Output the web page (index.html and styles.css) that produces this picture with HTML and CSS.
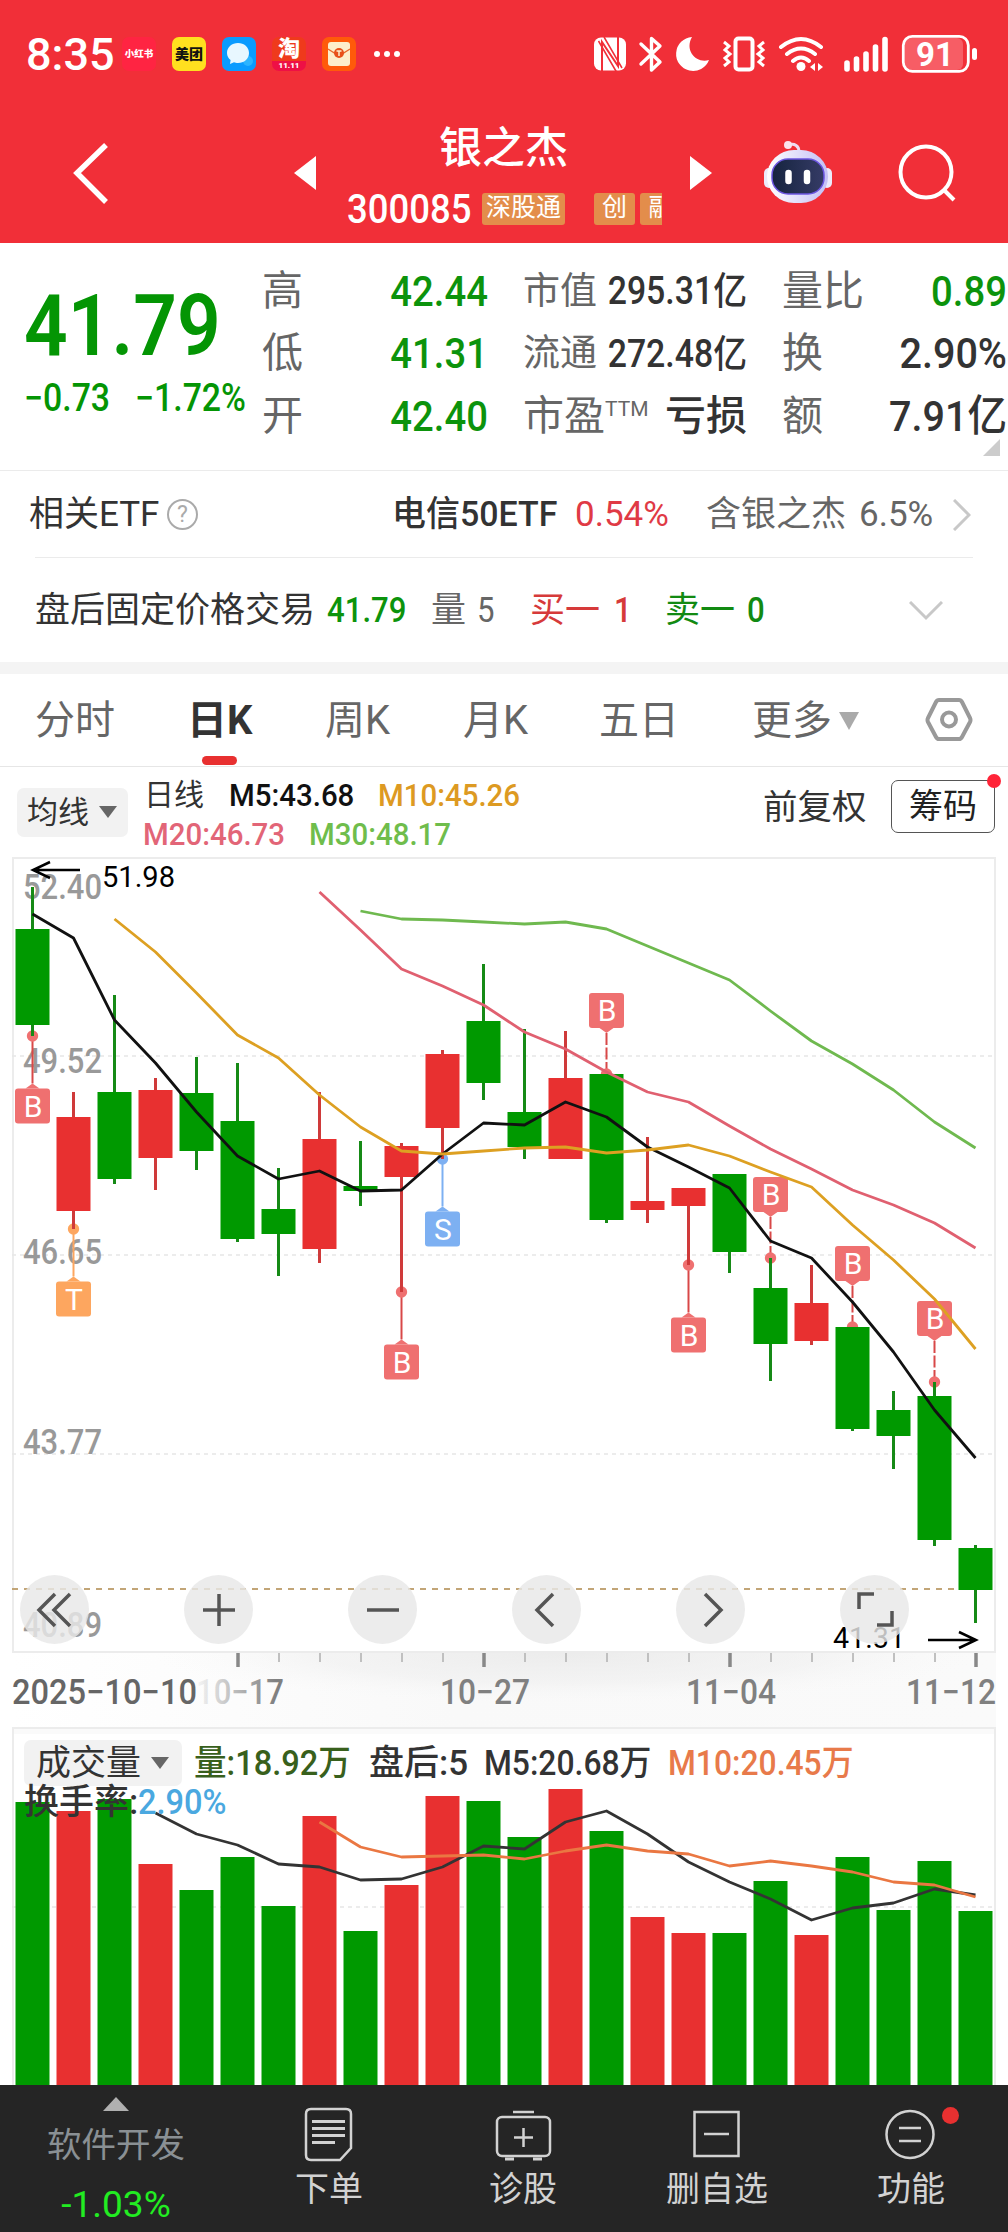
FILE: index.html
```html
<!DOCTYPE html>
<html lang="zh-CN">

<head>
    <meta charset="UTF-8">
    <meta name="viewport" content="width=device-width, initial-scale=1.0">
    <title>银之杰 300085</title>
    <link rel="stylesheet" href="styles.css">
</head>

<body>

    <!-- Header -->
    <header class="header">
        <div class="status">
            <span class="clock">8:35</span>
            <span class="app app-xhs">小红书</span>
            <span class="app app-mt">美团</span>
            <span class="app app-chat">
                <svg viewBox="0 0 34 34"><circle cx="26" cy="24" r="5" fill="#2bb4ff"/><path d="M16 6c6 0 11 4 11 10s-5 10-11 10c-1.500 0-3-.3-4-.7L8 27l.6-4C6.500 21.500 5 19 5 16 5 10 10 6 16 6z" fill="#e8f7ff"/></svg>
            </span>
            <span class="app app-tb"><b>淘</b><i>11.11</i></span>
            <span class="app app-mail">
                <svg viewBox="0 0 34 34"><rect x="6" y="5" width="22" height="24" rx="3" fill="#fdeecb"/><path d="M6 12l8 5h6l8-5" fill="none" stroke="#e8672a" stroke-width="1.300"/><circle cx="17" cy="16" r="5" fill="#e8501a"/><path d="M14.500 14h5M17 14v5" stroke="#fdeecb" stroke-width="1.500"/></svg>
            </span>
            <span class="dots"><i></i><i></i><i></i></span>
            <svg class="sys" viewBox="590 30 390 46" width="390" height="46">
                <rect x="594" y="36.500" width="32" height="33" rx="7" fill="#fff"/>
                <path d="M602 71V41l16 24V36" fill="none" stroke="#f12f38" stroke-width="2"/>
                <path d="M604 36l18 31M598.500 40l18 31" fill="none" stroke="#f12f38" stroke-width="1.500"/>
                <path d="M641 43l19 18-8.500 8V37.500l8.500 7.500-19 18" fill="none" stroke="#fff" stroke-width="3.400" stroke-linejoin="round" stroke-linecap="round"/>
                <path d="M692 36a17 17 0 1 0 17 23c-12 4-25-9-17-23z" fill="#fff"/>
                <rect x="735.500" y="37.500" width="17" height="31" rx="3" fill="none" stroke="#fff" stroke-width="4"/>
                <path d="M724 41l5 4-4 4 5 4-5 4 4 4-5 4M764 41l-5 4 4 4-5 4 5 4-4 4 5 4" fill="none" stroke="#fff" stroke-width="3"/>
                <path d="M781 46q20-16 40 0M787 53q14-11 28 0M793 60q8-7 16 0" fill="none" stroke="#fff" stroke-width="4" stroke-linecap="round"/>
                <circle cx="801" cy="65.500" r="4.500" fill="#fff"/>
                <path d="M810 66l5-4v8zM823 66l-5-4v8z" fill="#fff"/>
                <path d="M847 62v6M856.500 58v10M866 53v15M875.500 46v22M885 38.500v29.500" stroke="#fff" stroke-width="5.600" stroke-linecap="round"/>
                <rect x="905" y="37" width="58" height="32" rx="6" fill="#f75d65"/>
                <rect x="903.300" y="35.300" width="65" height="35" rx="9" fill="none" stroke="#fff" stroke-width="2.800"/>
                <rect x="972" y="47" width="5" height="12" rx="2.500" fill="#fff"/>
                <text x="935" y="65" class="battery">91</text>
            </svg>
        </div>
        <div class="nav">
            <svg class="back" viewBox="0 0 40 64" width="40" height="64"><path d="M36 4L7 32l29 29" fill="none" stroke="#fff" stroke-width="5.500"/></svg>
            <svg class="prev" viewBox="0 0 24 36" width="24" height="36"><path d="M1 18L23 1v34z" fill="#fff"/></svg>
            <div class="title">
                <h1>银之杰</h1>
                <div class="code"><span class="num">300085</span><em class="t1">深股通</em><em class="t2">创</em><em class="t3">融</em></div>
            </div>
            <svg class="next" viewBox="0 0 24 36" width="24" height="36"><path d="M23 18L1 1v34z" fill="#fff"/></svg>
            <svg class="robot" viewBox="0 0 70 66" width="70" height="66">
                <defs>
                    <linearGradient id="shell" x1="0" x2="1"><stop offset="0" stop-color="#fff"/><stop offset="1" stop-color="#c3bff5"/></linearGradient>
                    <linearGradient id="face" x1="0" x2="1"><stop offset="0" stop-color="#16243f"/><stop offset="1" stop-color="#353b66"/></linearGradient>
                </defs>
                <path d="M25 5c7-2 11 1 11 7" fill="none" stroke="#eedcf2" stroke-width="3"/>
                <circle cx="25" cy="5" r="4" fill="#fbe3ee"/>
                <rect x="1" y="28" width="10" height="20" rx="5" fill="#ecebfb"/>
                <rect x="59" y="28" width="10" height="20" rx="5" fill="#ecebfb"/>
                <rect x="4" y="10" width="61" height="53" rx="27" fill="url(#shell)"/>
                <rect x="9" y="19" width="52" height="35" rx="16" fill="url(#face)" stroke="#6b55e0" stroke-width="1.500"/>
                <path d="M25.500 33v8M44 33v8" stroke="#fff" stroke-width="6.500" stroke-linecap="round"/>
            </svg>
            <svg class="search" viewBox="0 0 60 60" width="60" height="60"><circle cx="28" cy="29" r="25.500" fill="none" stroke="#fff" stroke-width="4"/><path d="M46 47l10 10" stroke="#fff" stroke-width="4"/></svg>
        </div>
    </header>

    <!-- Quote -->
    <section class="quote">
        <div class="price">
            <strong class="num">41.79</strong>
            <div><span class="num">−0.73</span><span class="num">−1.72%</span></div>
        </div>
        <dl class="c1">
            <dt>高</dt><dd class="down">42.44</dd>
            <dt>低</dt><dd class="down">41.31</dd>
            <dt>开</dt><dd class="down">42.40</dd>
        </dl>
        <dl class="c2">
            <dt>市值</dt><dd>295.31亿</dd>
            <dt>流通</dt><dd>272.48亿</dd>
            <dt class="big">市盈<sup>TTM</sup></dt><dd class="big">亏损</dd>
        </dl>
        <dl class="c3">
            <dt>量比</dt><dd class="down">0.89</dd>
            <dt>换</dt><dd class="wide">2.90%</dd>
            <dt>额</dt><dd class="wide">7.91亿</dd>
        </dl>
        <i class="corner"></i>
    </section>

    <section class="etf">
        <span>相关ETF</span>
        <i class="help">?</i>
        <b>电信50ETF</b>
        <span class="up">0.54%</span>
        <span class="grey">含银之杰</span>
        <span class="grey">6.5%</span>
        <svg viewBox="0 0 18 32" width="18" height="32"><path d="M1 1l15 15L1 31" fill="none" stroke="#c8c8c8" stroke-width="3"/></svg>
    </section>

    <section class="after">
        <span>盘后固定价格交易</span>
        <b class="down num">41.79</b>
        <span class="grey">量</span>
        <span class="grey num">5</span>
        <span class="buy">买一</span>
        <b class="buy num">1</b>
        <span class="sell">卖一</span>
        <b class="sell num">0</b>
        <svg viewBox="0 0 34 20" width="34" height="20"><path d="M1 1l16 16L33 1" fill="none" stroke="#c8c8c8" stroke-width="3"/></svg>
    </section>

    <!-- Period tabs -->
    <nav class="tabs">
        <a>分时</a>
        <a class="active">日K</a>
        <a>周K</a>
        <a>月K</a>
        <a>五日</a>
        <a>更多<svg viewBox="0 0 22 18" width="22" height="18"><path d="M1 0h20L11 18z" fill="#aaa"/></svg></a>
        <svg class="hex" viewBox="0 0 48 46" width="48" height="46"><path d="M14 3h20q2 0 3 2l8 16q1 2 0 4l-8 15q-1 2-3 2H14q-2 0-3-2L3 25q-1-2 0-4l8-16q1-2 3-2z" fill="none" stroke="#999" stroke-width="4"/><circle cx="24" cy="22.500" r="7" fill="none" stroke="#999" stroke-width="4"/></svg>
    </nav>

    <section class="legend">
        <span class="pill">均线<svg viewBox="0 0 18 12" width="18" height="12"><path d="M0 0h18L9 12z" fill="#666"/></svg></span>
        <div class="ma">
            <div><span class="name">日线</span><span class="m5 num">M5:43.68</span><span class="m10 num">M10:45.26</span></div>
            <div><span class="m20 num">M20:46.73</span><span class="m30 num">M30:48.17</span></div>
        </div>
        <span class="adjust">前复权</span>
        <span class="chips">筹码</span>
    </section>

    <!-- Candles and volume -->
    <section class="charts">
        <svg id="kline" viewBox="0 857 1008 870" width="1008" height="870"></svg>
        <div class="tools">
            <span><svg viewBox="0 0 40 40"><path d="M20 4L4 20l16 16M35 4L19 20l16 16"/></svg></span>
            <span><svg viewBox="0 0 40 40"><path d="M4 20h32M20 4v32"/></svg></span>
            <span><svg viewBox="0 0 40 40"><path d="M4 20h32"/></svg></span>
            <span><svg viewBox="0 0 40 40"><path d="M26 4L10 20l16 16"/></svg></span>
            <span><svg viewBox="0 0 40 40"><path d="M14 4l16 16-16 16"/></svg></span>
            <span><svg viewBox="0 0 40 40"><path d="M4 19V4h15M37 21v14H22"/></svg></span>
        </div>
    </section>
    <section class="charts">
        <svg id="volume" viewBox="0 1727 1008 358" width="1008" height="358"></svg>
        <div class="vol-head">
            <div class="vol-row">
                <span class="pill">成交量<svg viewBox="0 0 18 12" width="18" height="12"><path d="M0 0h18L9 12z" fill="#666"/></svg></span>
                <span class="v1 num">量:18.92万</span>
                <span class="v2">盘后:5</span>
                <span class="v3 num">M5:20.68万</span>
                <span class="v4 num">M10:20.45万</span>
            </div>
            <div class="turnover">换手率:<span class="num">2.90%</span></div>
        </div>
    </section>

    <!-- Bottom bar -->
    <footer class="bar">
        <div class="sector">
            <svg viewBox="0 0 26 14" width="26" height="14"><path d="M0 14L13 0l13 14z" fill="#b0b0b0"/></svg>
            <span>软件开发</span>
            <b>-1.03%</b>
        </div>
        <div class="item">
            <svg viewBox="0 0 60 60" width="60" height="60"><path d="M12 4h35q5 0 5 5v34L41 55H12q-5 0-5-5V9q0-5 5-5z"/><path d="M13 16.500h33M13 23.500h33M13 30.500h33M13 37.500h23" stroke-width="3"/></svg>
            <span>下单</span>
        </div>
        <div class="item">
            <svg viewBox="0 0 60 60" width="60" height="60"><path d="M20 7h21"/><rect x="4" y="12" width="53" height="39" rx="5"/><path d="M30.500 23v19M21 32.500h19"/><path d="M12 54h9M40 54h9" stroke-width="3"/></svg>
            <span>诊股</span>
        </div>
        <div class="item">
            <svg viewBox="0 0 60 60" width="60" height="60"><rect x="7.500" y="7" width="44" height="44"/><path d="M17 29h25"/></svg>
            <span>删自选</span>
        </div>
        <div class="item">
            <svg viewBox="0 0 60 60" width="60" height="60"><circle cx="29" cy="29.500" r="23.500"/><path d="M18 23h22M18 36h22"/></svg>
            <span>功能</span>
            <i class="badge"></i>
        </div>
    </footer>

    <script src="chart.js"></script>

</body>

</html>
```
FILE: styles.css
```css
* {
    margin: 0;
    padding: 0;
    box-sizing: border-box;
}

body {
    width: 1008px;
    font-family: Roboto, "Noto Sans CJK SC", sans-serif;
    font-size: 35px;
    line-height: 1;
    color: #333;
    background: #fff;
    white-space: nowrap;
}

i, em {
    font-style: normal;
}

svg {
    display: block;
    flex: none;
}

/* condensed figures */
.num {
    display: inline-block;
    flex: none;
    transform: scaleX(0.89);
    transform-origin: left;
}

.down { color: #0c930c; }
.up { color: #e03a45; }
.grey { color: #666; }
.buy { color: #d63a3a; }
.sell { color: #128a12; }

/* Header */
.header {
    height: 243px;
    background: #f12f38;
    color: #fff;
}

.status {
    display: flex;
    align-items: center;
    height: 108px;
    padding-left: 26px;
}

.clock {
    width: 96px;
    font-size: 45px;
    font-weight: 500;
}

.app {
    display: flex;
    align-items: center;
    justify-content: center;
    width: 34px;
    height: 34px;
    margin-right: 16px;
    border-radius: 7px;
    font-weight: 900;
}

.app svg { width: 34px; height: 34px; }
.app-xhs { background: #ff2442; font-size: 9.5px; }
.app-mt { background: #ffe01f; color: #111; font-size: 14px; }
.app-chat { background: #0a9bff; }

.app-tb {
    flex-direction: column;
    background: linear-gradient(#ef3a1c 0 70%, #ee1045 70%);
}

.app-tb b { font-size: 22px; line-height: 24px; }
.app-tb i { font-size: 8px; line-height: 10px; }
.app-mail { background: #ff5a0a; }

.dots {
    display: flex;
    gap: 4px;
    margin-left: 2px;
}

.dots i {
    width: 6px;
    height: 6px;
    border-radius: 50%;
    background: #fff;
}

.sys {
    margin-left: 190px;
}

.battery {
    font-size: 33px;
    font-weight: 700;
    fill: #fff;
    text-anchor: middle;
}

.nav {
    display: flex;
    align-items: center;
    height: 130px;
    padding-left: 70px;
}

.prev { margin-left: 183px; }

.title {
    width: 315px;
    margin-left: 30px;
    overflow: hidden;
}

.title h1 {
    padding-left: 92px;
    font-size: 43px;
    font-weight: 500;
    line-height: 60px;
}

.code {
    display: flex;
    align-items: center;
    height: 40px;
    margin-top: 11px;
    font-size: 41px;
    font-weight: 500;
}

.code span { width: 141px; margin-right: -6px; padding-top: 1px; }

.code em {
    flex: none;
    height: 32px;
    border-radius: 3px;
    background: #e38d4b;
    font-size: 25px;
    font-weight: 400;
    line-height: 30px;
    text-align: center;
}

.t1 { width: 83px; }
.t2 { width: 41px; margin: 0 5px 0 29px; }
.t3 { width: 42px; }
.next { margin-left: 27px; }
.robot { margin-left: 50px; }
.search { margin-left: 65px; }

/* Quote */
.quote {
    position: relative;
    display: flex;
    height: 228px;
    padding: 17px 0 0 24px;
    border-bottom: 1px solid #ebebeb;
}

.price {
    width: 238px;
    color: #049504;
}

.price strong {
    display: block;
    padding-top: 23px;
    font-size: 86px;
    font-weight: 600;
}

.price div {
    display: flex;
    margin-top: 10px;
    font-size: 38px;
    font-weight: 500;
}

.price div span:first-child { width: 111px; }

.quote dl {
    flex: none;
    display: grid;
    grid-template-columns: 62px 1fr;
    grid-auto-rows: 62.5px;
    align-items: center;
    font-size: 41px;
}

.quote dt { color: #666; }

.quote dd {
    font-size: 43px;
    font-weight: 500;
    text-align: right;
    transform: scaleX(0.89);
    transform-origin: right;
}

.c1 { width: 226px; }
.quote .c2 { width: 224px; margin-left: 35px; font-size: 37px; }
.quote .c2 dd { font-size: 38px; }
.quote .c2 .big { font-size: 41px; transform: none; }
.quote .c3 { width: 225px; margin-left: 35px; }
.quote .c3 .wide { transform: scaleX(0.92); }

.quote sup {
    font-size: 21px;
    line-height: 0;
    vertical-align: 14px;
}

.corner {
    position: absolute;
    right: 8px;
    bottom: 14px;
    border-style: solid;
    border-width: 0 0 17px 17px;
    border-color: transparent transparent #ccc;
}

.etf,
.after {
    display: grid;
    align-items: center;
}

.etf {
    grid-template-columns: 138px 225px 183px 131px 153px 94px 18px;
    height: 87px;
    padding: 0 0 0 29px;
    background: linear-gradient(#ebebeb, #ebebeb) 35px 100% / 938px 1px no-repeat;
}

.etf b {
    font-weight: 500;
    transform: scaleX(0.97);
    transform-origin: left;
}

.help {
    width: 31px;
    height: 31px;
    border: 2px solid #aaa;
    border-radius: 50%;
    color: #aaa;
    font-size: 23px;
    line-height: 27px;
    text-align: center;
}

.after {
    grid-template-columns: 292px 104px 46px 53px 84px 51px 82px 162px 34px;
    height: 104px;
    padding: 1px 0 0 35px;
}

.after b { font-weight: 500; }

/* Tabs */
.tabs {
    display: grid;
    grid-template-columns: 152px 138px 138px 136px 153px 173px 48px;
    align-items: center;
    height: 105px;
    padding-left: 35px;
    border-top: 12px solid #f4f4f4;
    border-bottom: 1px solid #e6e6e6;
    color: #666;
    font-size: 40px;
}

.tabs a {
    position: relative;
    display: flex;
    align-items: center;
    padding-top: 2px;
}

.tabs a svg { margin-left: 6px; }

.active {
    color: #333;
    font-weight: 700;
}

.active::after {
    content: "";
    position: absolute;
    left: 15px;
    top: 57px;
    width: 35px;
    height: 9px;
    border-radius: 5px;
    background: #e83030;
}

.legend {
    display: flex;
    align-items: center;
    height: 90px;
    padding-left: 17px;
}

.pill {
    display: flex;
    align-items: center;
    height: 49px;
    border-radius: 7px;
    background: #f2f2f2;
}

.legend .pill {
    width: 111px;
    padding-left: 10px;
    font-size: 31px;
}

.pill svg { margin-left: 10px; }

.ma {
    width: 620px;
    margin-left: 15px;
    padding-top: 4px;
    font-size: 32px;
    font-weight: 500;
}

.ma div {
    display: flex;
    height: 39px;
    align-items: center;
}

.ma .num { transform: scaleX(0.92); }
.ma .name { width: 86px; font-weight: 400; font-size: 30px; padding-left: 1px; }
.m5 { width: 149px; color: #111; }
.m10 { color: #dd9a22; }
.m20 { width: 166px; color: #e26577; }
.m30 { color: #6fbd4c; }
.adjust { width: 128px; margin-top: -9px; font-size: 34.5px; }

.chips {
    position: relative;
    width: 104px;
    height: 53px;
    margin-top: -12px;
    border: 1px solid #555;
    border-radius: 7px;
    color: #222;
    font-size: 34px;
    line-height: 50px;
    text-align: center;
}

.chips::after {
    content: "";
    position: absolute;
    right: -7px;
    top: -7px;
    width: 14px;
    height: 14px;
    border-radius: 50%;
    background: #ff2438;
}

/* Charts */
.charts {
    position: relative;
}

.tools {
    position: absolute;
    left: 20px;
    top: 718px;
    display: flex;
    gap: 95px;
}

.tools span {
    display: flex;
    align-items: center;
    justify-content: center;
    width: 69px;
    height: 69px;
    border-radius: 50%;
    background: rgba(232, 232, 232, 0.82);
}

.tools svg {
    width: 40px;
    height: 40px;
    fill: none;
    stroke: #555;
    stroke-width: 3.5;
}

.axis-price { font-size: 35px; fill: #999; font-weight: 500; }
.axis-date { font-size: 35px; fill: #808080; font-weight: 500; }
.peak { font-size: 30px; fill: #000; }
.flag { font-size: 30px; fill: #fff; text-anchor: middle; }

.vol-head {
    position: absolute;
    left: 24px;
    top: 13px;
    font-weight: 500;
}

.vol-row {
    display: flex;
    align-items: center;
    height: 46px;
}

.vol-row .pill {
    flex: none;
    width: 158px;
    height: 46px;
    padding-left: 12px;
    font-weight: 400;
}

.v1 { width: 175px; margin-left: 12px; color: #38601c; }
.vol-row .v1 { transform: scaleX(0.93); }
.v2 { flex: none; width: 115px; }
.v3 { width: 184px; }
.v4 { color: #e87a4a; }
.vol-row .v3, .vol-row .v4 { transform: scaleX(0.91); }
.turnover { line-height: 33px; }
.turnover span { color: #4aa8e0; transform: scaleX(0.93); }

/* Bottom bar */
.bar {
    display: grid;
    grid-template-columns: 232px repeat(4, 194px);
    height: 147px;
    background: #252525;
    color: #d2d2d2;
    font-size: 34px;
}

.sector,
.item {
    position: relative;
    display: flex;
    flex-direction: column;
    align-items: center;
}

.sector {
    padding-top: 12px;
    color: #8a9094;
    font-size: 34.5px;
}

.sector span { margin-top: 17px; }

.sector b {
    margin-top: 23px;
    color: #22ec22;
    font-size: 37px;
    font-weight: 400;
}

.item {
    padding-top: 20px;
}

.item svg {
    fill: none;
    stroke: #d2d2d2;
    stroke-width: 2.5;
}

.item span { margin-top: 7px; }

.badge {
    position: absolute;
    left: 128px;
    top: 22px;
    width: 17px;
    height: 17px;
    border-radius: 50%;
    background: #e83030;
}
```
FILE: chart.js
```js
const RED = '#e83030';
const GREEN = '#009900';
const STEP = 41;
const X0 = 32.5;
const BAR = 34;

// colour, body top, body bottom, wick top, wick bottom, volume top
const days = [
    ['g', 929, 1025, 887, 1036, 1802],
    ['r', 1117, 1211, 1092, 1229, 1811],
    ['g', 1092, 1179, 995, 1184, 1799],
    ['r', 1090, 1158, 1078, 1190, 1864],
    ['g', 1093, 1151, 1057, 1170, 1890],
    ['g', 1121, 1239, 1063, 1242, 1857],
    ['g', 1209, 1234, 1168, 1276, 1906],
    ['r', 1139, 1249, 1092, 1263, 1816],
    ['g', 1186, 1191, 1141, 1206, 1931],
    ['r', 1146, 1177, 1143, 1292, 1885],
    ['r', 1054, 1128, 1050, 1159, 1796],
    ['g', 1021, 1083, 964, 1100, 1801],
    ['g', 1112, 1147, 1029, 1159, 1837],
    ['r', 1078, 1159, 1031, 1159, 1789],
    ['g', 1074, 1220, 1074, 1223, 1831],
    ['r', 1201, 1210, 1137, 1223, 1917],
    ['r', 1188, 1206, 1188, 1265, 1933],
    ['g', 1174, 1252, 1174, 1273, 1933],
    ['g', 1288, 1344, 1258, 1381, 1881],
    ['r', 1303, 1341, 1265, 1345, 1935],
    ['g', 1327, 1429, 1327, 1431, 1857],
    ['g', 1410, 1436, 1391, 1469, 1910],
    ['g', 1396, 1540, 1382, 1546, 1861],
    ['g', 1548, 1590, 1545, 1623, 1911]
];

// first day index, then one y value per day
const averages = [
    ['#111111', 0, [914, 938, 1020, 1063, 1112, 1156, 1179, 1171, 1191, 1190, 1154, 1123, 1125, 1102, 1117, 1147, 1167, 1188, 1241, 1258, 1302, 1352, 1410, 1458]],
    ['#6fb94f', 8, [911, 919, 920, 922, 924, 922, 929, 946, 963, 980, 1011, 1041, 1064, 1090, 1122, 1148]],
    ['#e06070', 7, [892, 930, 969, 986, 1005, 1032, 1049, 1072, 1092, 1102, 1126, 1149, 1169, 1190, 1205, 1223, 1248]],
    ['#dda022', 2, [919, 952, 993, 1035, 1058, 1095, 1127, 1151, 1154, 1151, 1148, 1147, 1153, 1150, 1145, 1156, 1172, 1187, 1225, 1260, 1299, 1349]]
];

const volumeAverages = [
    ['#333333', 3, [1813, 1834, 1845, 1864, 1867, 1880, 1879, 1867, 1846, 1849, 1822, 1811, 1834, 1862, 1882, 1899, 1920, 1908, 1903, 1889, 1895]],
    ['#ea7742', 7, [1822, 1847, 1857, 1856, 1855, 1859, 1851, 1845, 1851, 1854, 1866, 1861, 1866, 1872, 1882, 1885, 1897]]
];

// day index, letter, dot y, flag above the dot or below it
const flags = [
    [0, 'B', 1036, 'below'],
    [1, 'T', 1229, 'below'],
    [9, 'B', 1292, 'below'],
    [10, 'S', 1159, 'below'],
    [14, 'B', 1074, 'above'],
    [16, 'B', 1265, 'below'],
    [18, 'B', 1258, 'above'],
    [20, 'B', 1327, 'above'],
    [22, 'B', 1382, 'above']
];
const flagColors = { B: '#ef7070', T: '#fda65f', S: '#7db0f2' };

const x = i => X0 + i * STEP;
const rect = (l, t, w, h, fill, extra = '') => `<rect x="${l}" y="${t}" width="${w}" height="${h}" fill="${fill}" ${extra}/>`;
const line = (x1, y1, x2, y2, color, w, extra = '') => `<line x1="${x1}" y1="${y1}" x2="${x2}" y2="${y2}" stroke="${color}" stroke-width="${w}" ${extra}/>`;
const text = (l, y, w, cls, str, extra = '') => `<text x="${l}" y="${y}" class="${cls}" textLength="${w}" lengthAdjust="spacingAndGlyphs" ${extra}>${str}</text>`;
const curve = ([color, start, ys]) => `<polyline points="${ys.map((y, n) => x(start + n) + ',' + y).join(' ')}" fill="none" stroke="${color}" stroke-width="2.8" stroke-linejoin="round"/>`;

function drawFlag([i, letter, y, side]) {
    const cx = x(i);
    const color = flagColors[letter];
    const below = side === 'below';
    const top = below ? y + 52.5 : y - 81;
    const tip = below ? top - 5 : top + 40;
    const base = below ? top : top + 35;
    const dark = letter === 'B' ? '#d84848' : color;
    return line(cx, y, cx, tip, dark, 2, below ? '' : 'stroke-dasharray="12 2.500"')
        + `<circle cx="${cx}" cy="${y}" r="5.700" fill="${color}"/>`
        + rect(cx - 17.5, top, 35, 35, color, 'rx="3"')
        + `<path d="M${cx - 7} ${base}L${cx} ${tip}L${cx + 7} ${base}z" fill="${color}"/>`
        + `<text x="${cx + 0.5}" y="${top + 28}" class="flag">${letter}</text>`;
}

function drawKline() {
    let out = '<defs><linearGradient id="fade"><stop offset="0" stop-color="#fff"/><stop offset="0.45" stop-color="#f9f9f9"/><stop offset="1" stop-color="#fafafa"/></linearGradient>'
        + '<radialGradient id="shade" cx="0.5" cy="0" r="0.5" gradientTransform="scale(1 2)"><stop offset="0" stop-color="#e6e6e6" stop-opacity="0.7"/><stop offset="0.6" stop-color="#ececec" stop-opacity="0.45"/><stop offset="1" stop-color="#f8f8f8" stop-opacity="0"/></radialGradient>'
        + '<linearGradient id="date"><stop offset="0" stop-color="#808080" stop-opacity="0.05"/><stop offset="0.9" stop-color="#808080"/></linearGradient></defs>';
    out += rect(12, 1653, 984, 75, 'url(#fade)');
    out += rect(150, 1653, 834, 50, 'url(#shade)');
    out += rect(13, 858, 982, 794, '#fff', 'stroke="#ececec" stroke-width="2"');
    [1056, 1255, 1454].forEach(y => out += line(12, y, 994, y, '#e6e6e6', 1.5, 'stroke-dasharray="4 4"'));
    [['52.40', 899], ['49.52', 1073], ['46.65', 1264], ['43.77', 1454], ['40.89', 1637]]
        .forEach(([str, y]) => out += text(23, y, 79, 'axis-price', str));
    out += line(12, 1589, 954, 1589, '#c2a577', 2, 'stroke-dasharray="6 6"');

    flags.forEach(f => out += drawFlag(f));
    days.forEach(([c, top, bottom, high, low], i) => {
        const color = c === 'r' ? RED : GREEN;
        out += line(x(i), high, x(i), low, c === 'r' ? '#cf3a3a' : '#168a16', 3);
        out += rect(x(i) - BAR / 2, top, BAR, bottom - top, color);
    });
    averages.forEach(a => out += curve(a));

    // highest and lowest price
    out += '<path d="M80 870H33M50 862L33 870l17 8M928 1640h47M959 1632l17 8-17 8" fill="none" stroke="#000" stroke-width="2.500"/>';
    out += text(102, 887, 73, 'peak', '51.98') + text(833, 1648, 72, 'peak', '41.31');

    for (let i = 5; i < 24; i++) {
        const major = (i - 5) % 6 === 0;
        out += line(x(i) + 0.5, 1653, x(i) + 0.5, major ? 1667 : 1662, major ? '#888' : '#c0c0c0', major ? 3.5 : 2);
    }
    out += text(12, 1704, 185, 'axis-date', '2025−10−10', 'style="fill:#666"');
    out += text(196, 1704, 88, 'axis-date', '10−17', 'style="fill:url(#date)"');
    out += text(440, 1704, 90, 'axis-date', '10−27') + text(686, 1704, 90, 'axis-date', '11−04') + text(906, 1704, 90, 'axis-date', '11−12');
    document.getElementById('kline').innerHTML = out;
}

function drawVolume() {
    let out = rect(13, 1728, 982, 400, '#fff', 'stroke="#ececec" stroke-width="2"');
    out += rect(14, 1729, 980, 5, '#fafafa');
    out += line(12, 1907, 994, 1907, '#e6e6e6', 1.5, 'stroke-dasharray="4 4"');
    days.forEach((d, i) => out += rect(x(i) - BAR / 2, d[5], BAR, 2085 - d[5], d[0] === 'r' ? RED : GREEN));
    volumeAverages.forEach(a => out += curve(a));
    document.getElementById('volume').innerHTML = out;
}

drawKline();
drawVolume();
```
